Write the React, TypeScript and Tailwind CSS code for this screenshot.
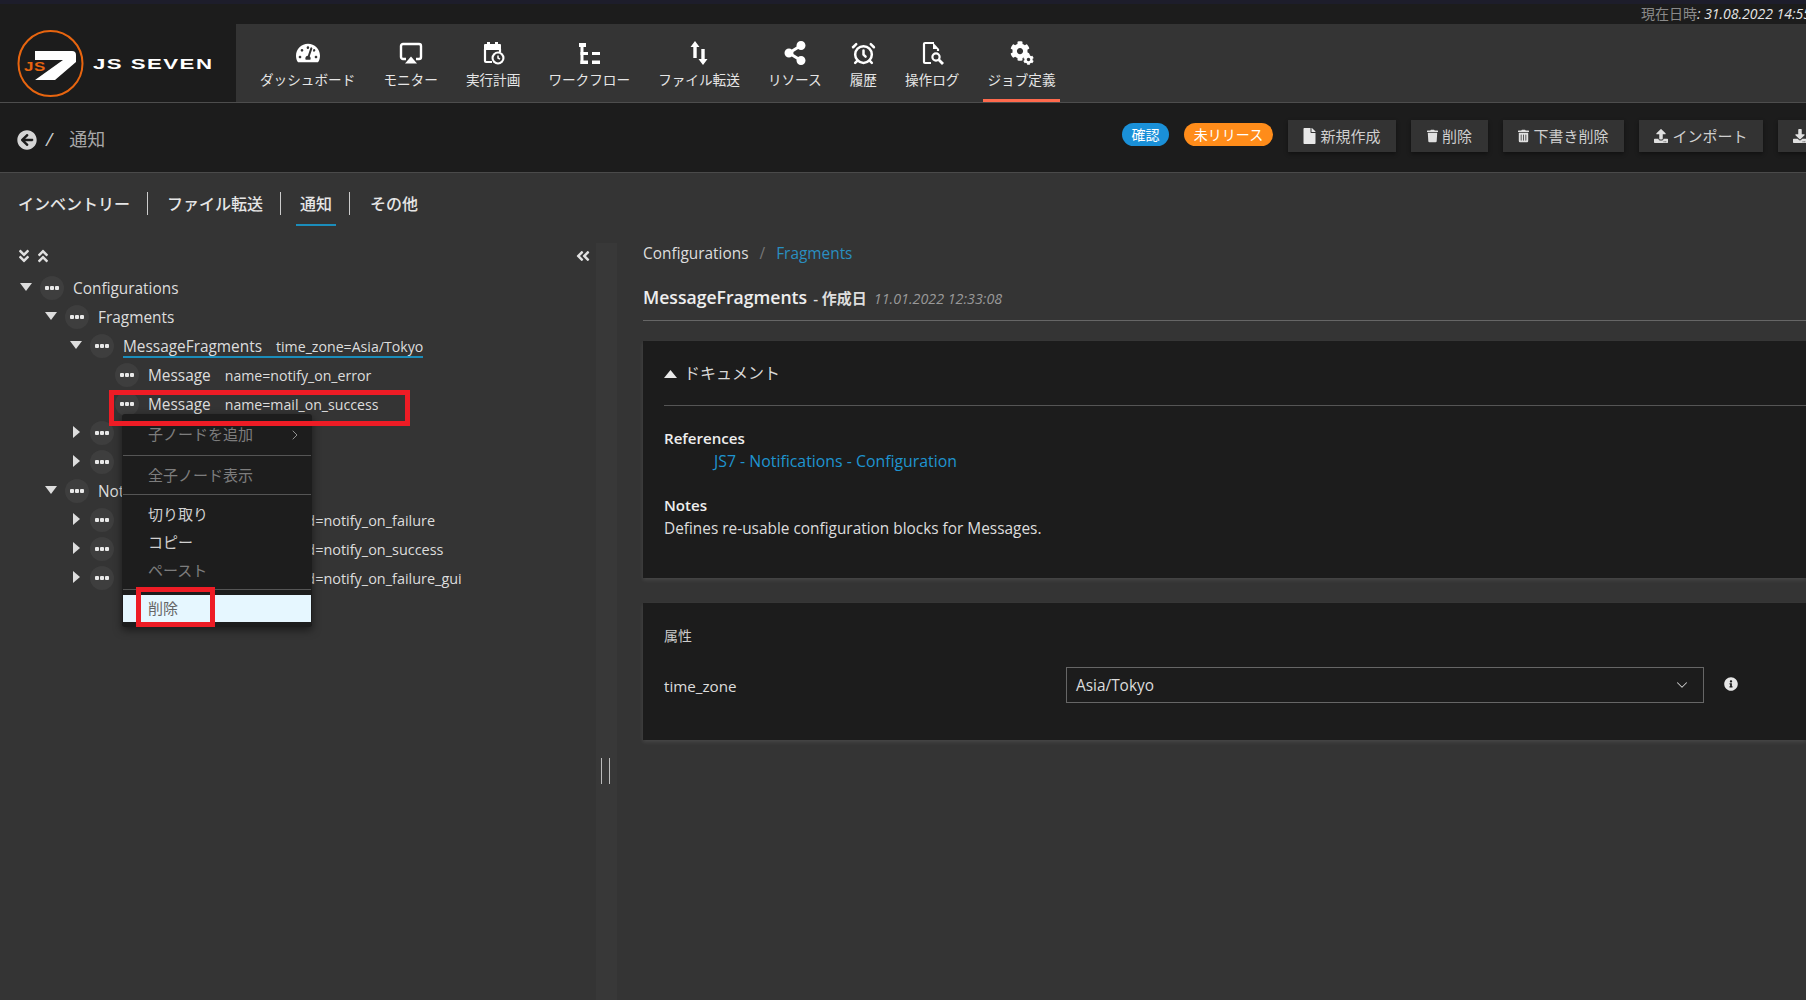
// App.tsx
import React from "react";
import {
  FaAngleDoubleDown,
  FaAngleDoubleLeft,
  FaAngleDoubleUp,
  FaArrowCircleLeft,
  FaCog,
  FaDownload,
  FaFile,
  FaInfoCircle,
  FaShareAlt,
  FaTachometerAlt,
  FaTrash,
  FaTrashAlt,
  FaUpload,
} from "react-icons/fa";
import { AlarmClock, ChevronDown, ChevronRight } from "lucide-react";

function AirplayIcon() {
  return (
    <svg viewBox="0 0 24 24" className="w-6 h-6" fill="none" stroke="#fff" strokeWidth="2.4">
      <path d="M7 18H4a2 2 0 0 1-2-2V5a2 2 0 0 1 2-2h16a2 2 0 0 1 2 2v11a2 2 0 0 1-2 2h-3" />
      <path d="M12 15.5l6 7H6z" fill="#fff" stroke="none" />
    </svg>
  );
}

function ScheduleIcon() {
  return (
    <svg viewBox="0 0 24 24" className="w-6 h-6" fill="none">
      <rect x="3" y="3" width="17" height="6" rx="1" fill="#fff" />
      <rect x="6" y="1" width="3" height="4" fill="#fff" />
      <rect x="14" y="1" width="3" height="4" fill="#fff" />
      <path d="M4 8v12a1 1 0 0 0 1 1h6M19 8v3" stroke="#fff" strokeWidth="2.2" />
      <circle cx="17" cy="17" r="6.5" fill="#fff" />
      <circle cx="17" cy="17" r="4.4" fill="#343434" />
      <path d="M17 14.5V17l2 1.2" stroke="#fff" strokeWidth="1.5" />
    </svg>
  );
}

function WorkflowIcon() {
  return (
    <svg viewBox="0 0 24 24" className="w-6 h-6" fill="#fff">
      <rect x="2" y="2" width="7" height="4" />
      <rect x="3.5" y="6" width="3" height="17" />
      <rect x="3.5" y="11" width="7.5" height="3" />
      <rect x="3.5" y="19.5" width="7.5" height="3.5" />
      <rect x="15" y="11" width="8" height="3" />
      <rect x="15" y="19.5" width="8" height="3.5" />
    </svg>
  );
}

function TransferIcon() {
  return (
    <svg viewBox="0 0 24 24" className="w-6 h-6" fill="#fff">
      <path d="M8 0l4.5 6H9.7v11H6.3V6H3.5z" />
      <path d="M16 24l4.5-6h-2.8V8h-3.4v10H11.5z" />
    </svg>
  );
}

function LogSearchIcon() {
  return (
    <svg viewBox="0 0 24 24" className="w-6 h-6" fill="none" stroke="#fff" strokeWidth="2.2">
      <path d="M14 2H5a1 1 0 0 0-1 1v18a1 1 0 0 0 1 1h6M18 8v2" />
      <path d="M13 1.5l6 6.5h-6z" fill="#fff" stroke="none" />
      <circle cx="16" cy="16" r="3.6" />
      <path d="M18.8 18.8L23 23" strokeWidth="2.8" />
    </svg>
  );
}

function GearsIcon() {
  return (
    <div className="relative w-6 h-6">
      <FaCog className="w-[20px] h-[20px] text-white" />
      <FaCog className="absolute right-0 bottom-0 w-[11px] h-[11px] text-white" />
    </div>
  );
}

function Logo() {
  return (
    <div className="w-[236px] h-full bg-[#1c1c1c] flex items-center pl-[17px] shrink-0">
      <div className="relative w-[67px] h-[67px] shrink-0">
        <svg viewBox="0 0 67 67" className="w-[67px] h-[67px]">
          <ellipse cx="33.5" cy="33.5" rx="32" ry="32.5" fill="none" stroke="#e8650f" strokeWidth="2" />
          <path d="M18 21H55Q59 21 59 25V32L38 50H18L46 30H18Z" fill="#fff" />
        </svg>
        <span className="absolute left-[7px] top-[30px] text-[#e8650f] text-[13px] leading-[13px] font-bold tracking-[0.5px] font-['Liberation_Sans',sans-serif] scale-x-[1.3] origin-left">
          JS
        </span>
      </div>
      <span className="ml-[9px] text-white text-[15px] leading-[15px] font-bold tracking-[1px] whitespace-nowrap font-['Liberation_Sans',sans-serif] scale-x-[1.48] origin-left">
        JS SEVEN
      </span>
    </div>
  );
}

const navItems = [
  { label: "ダッシュボード", icon: <FaTachometerAlt className="w-6 h-6 text-white" /> },
  { label: "モニター", icon: <AirplayIcon /> },
  { label: "実行計画", icon: <ScheduleIcon /> },
  { label: "ワークフロー", icon: <WorkflowIcon /> },
  { label: "ファイル転送", icon: <TransferIcon /> },
  { label: "リソース", icon: <FaShareAlt className="w-6 h-6 text-white" /> },
  { label: "履歴", icon: <AlarmClock className="w-[25px] h-[25px] text-white" strokeWidth={2.4} /> },
  { label: "操作ログ", icon: <LogSearchIcon /> },
  { label: "ジョブ定義", icon: <GearsIcon />, active: true },
];

function TopNav() {
  return (
    <div className="h-[79px] flex bg-[#343434] border-b border-[#4d4d4d] shrink-0">
      <Logo />
      <div className="flex pl-[20px] gap-[20px]">
        {navItems.map((item) => (
          <div
            key={item.label}
            className={
              "h-[78px] px-1 pt-[17px] flex flex-col items-center border-b-[3px] " +
              (item.active ? "border-[#ff6a4d]" : "border-transparent")
            }
          >
            <div className="h-6 flex items-center">{item.icon}</div>
            <div className="mt-[5px] text-[13.63px] leading-5 text-[#e6e6e6] whitespace-nowrap">
              {item.label}
            </div>
          </div>
        ))}
      </div>
    </div>
  );
}

function ToolButton({
  icon,
  label,
  width,
}: {
  icon: React.ReactNode;
  label: string;
  width: string;
}) {
  return (
    <button
      className={
        "h-[32px] flex items-center justify-center gap-[4px] bg-[#333333] text-[15px] text-[#cfcfcf] whitespace-nowrap shrink-0 shadow-[0_2px_4px_rgba(0,0,0,0.4)] " +
        width
      }
    >
      {icon}
      {label}
    </button>
  );
}

function SubHeader() {
  return (
    <div className="h-[70px] flex bg-[#1c1c1c] border-b border-[#4a4a4a] shrink-0 overflow-hidden">
      <div className="w-[1122px] shrink-0 flex items-center pl-[17px] pt-[4px]">
        <FaArrowCircleLeft className="w-5 h-5 text-[#d5d5d5]" />
        <span className="ml-[9px] text-[18px] text-[#cccccc] italic">/</span>
        <span className="ml-[17px] text-[18px] text-[#a8a8a8]">通知</span>
      </div>
      <div className="flex items-start pt-[17px] gap-[15px]">
        <span className="mt-[3px] w-[47px] h-[23px] rounded-full bg-[#1a90d8] text-white text-[14px] leading-[23px] text-center shrink-0">
          確認
        </span>
        <span className="mt-[3px] w-[89px] h-[23px] rounded-full bg-[#ff8c1a] text-white text-[14px] leading-[23px] text-center shrink-0">
          未リリース
        </span>
        <ToolButton width="w-[108px]" icon={<FaFile className="w-[13px] h-4 text-[#e8e8e8]" />} label="新規作成" />
        <ToolButton width="w-[77px]" icon={<FaTrash className="w-[11px] h-[14px] text-[#e0e0e0]" />} label="削除" />
        <ToolButton width="w-[121px]" icon={<FaTrashAlt className="w-[11px] h-[14px] text-[#e0e0e0]" />} label="下書き削除" />
        <ToolButton width="w-[124px]" icon={<FaUpload className="w-[14px] h-[14px] text-[#e0e0e0]" />} label="インポート" />
        <ToolButton width="w-[138px]" icon={<FaDownload className="w-[14px] h-[14px] text-[#e0e0e0]" />} label="エクスポート" />
      </div>
    </div>
  );
}

function Tabs() {
  return (
    <div className="h-[70px] flex items-start pt-[19px] pl-[18px] text-[16px] font-medium text-[#e6e6e6] shrink-0">
      <div className="h-[23px] leading-[25px] pr-[17px] border-r border-[#cccccc]">インベントリー</div>
      <div className="h-[23px] leading-[25px] pl-[19px] pr-[17px] border-r border-[#cccccc]">ファイル転送</div>
      <div className="relative h-[23px] leading-[25px] pl-[19px] pr-[17px] border-r border-[#cccccc]">
        通知
        <span className="absolute left-[15px] w-[40px] h-[2px] top-[32px] bg-[#1b8dbb]" />
      </div>
      <div className="h-[23px] leading-[25px] pl-[20px]">その他</div>
    </div>
  );
}

function Caret({ dir }: { dir: "down" | "right" | "none" }) {
  return (
    <span className="w-[12px] h-[12px] mr-[8px] shrink-0 flex items-center justify-center">
      {dir === "down" && (
        <svg viewBox="0 0 12 8" className="w-[12px] h-[8px] -mt-[4px]">
          <path d="M0 0h12L6 8z" fill="#dddddd" />
        </svg>
      )}
      {dir === "right" && (
        <svg viewBox="0 0 7 12" className="w-[7px] h-[12px] -mt-[3px]">
          <path d="M0 0l7 6-7 6z" fill="#dddddd" />
        </svg>
      )}
    </span>
  );
}

const treeRows = [
  { pad: "pl-[20px]", caret: "down", name: "Configurations" },
  { pad: "pl-[45px]", caret: "down", name: "Fragments" },
  { pad: "pl-[70px]", caret: "down", name: "MessageFragments", attr: "time_zone=Asia/Tokyo", attrSize: "text-[14.15px]", selected: true },
  { pad: "pl-[95px]", caret: "none", name: "Message", attr: "name=notify_on_error", attrSize: "text-[14.15px]" },
  { pad: "pl-[95px]", caret: "none", name: "Message", attr: "name=mail_on_success", attrSize: "text-[14.15px]" },
  { pad: "pl-[70px]", caret: "right", name: "MonitorFragments" },
  { pad: "pl-[70px]", caret: "right", name: "ObjectFragments" },
  { pad: "pl-[45px]", caret: "down", name: "Notifications" },
  { pad: "pl-[70px]", caret: "right", name: "Notification", attr: "notification_id=notify_on_failure", attrSize: "text-[14.45px]" },
  { pad: "pl-[70px]", caret: "right", name: "Notification", attr: "notification_id=notify_on_success", attrSize: "text-[14.45px]" },
  { pad: "pl-[70px]", caret: "right", name: "Notification", attr: "notification_id=notify_on_failure_gui", attrSize: "text-[14.45px]" },
] as const;

function TreeRow({ row }: { row: (typeof treeRows)[number] }) {
  const hasAttr = "attr" in row;
  const selected = "selected" in row && row.selected;
  return (
    <div className={"h-[29px] flex items-center whitespace-nowrap " + row.pad}>
      <Caret dir={row.caret} />
      <span className="w-6 h-6 mr-[9px] rounded-full bg-[#3e3e3e] flex items-center justify-center shrink-0 -mt-[1px]">
        <svg viewBox="0 0 14 4" className="w-[14px] h-[4px]" fill="#e8e8e8">
          <rect x="0" width="4" height="4" rx="1" />
          <rect x="5" width="4" height="4" rx="1" />
          <rect x="10" width="4" height="4" rx="1" />
        </svg>
      </span>
      <span
        className={
          "h-[23px] leading-[22px] text-[#dddddd] " +
          (selected ? "border-b-2 border-[#1b8dbb]" : "")
        }
      >
        <span className={hasAttr ? "mr-[14px] text-[15.4px]" : "text-[15.4px]"}>{row.name}</span>
        {hasAttr && <span className={row.attrSize}>{row.attr}</span>}
      </span>
    </div>
  );
}

function MenuItem({ label, muted }: { label: string; muted?: boolean }) {
  return (
    <div
      className={
        "h-[28px] leading-[26px] pl-[26px] text-[15px] " +
        (muted ? "text-[#7d7d7d]" : "text-[#d0d0d0]")
      }
    >
      {label}
    </div>
  );
}

function ContextMenu() {
  return (
    <div className="absolute left-[122px] top-[171px] w-[190px] h-[213px] pt-[7px] rounded-[3px] bg-[#1d1d1d] shadow-[0_3px_8px_rgba(0,0,0,0.5)]">
      <div className="relative">
        <MenuItem label="子ノードを追加" muted />
        <ChevronRight className="absolute right-[9px] top-[6px] w-4 h-4 text-[#999999]" strokeWidth={1.4} />
      </div>
      <div className="mt-[6px] mx-px h-px bg-[#555555]" />
      <div className="mt-[6px]">
        <MenuItem label="全子ノード表示" muted />
      </div>
      <div className="mt-[4px] mx-px h-px bg-[#555555]" />
      <div className="mt-[6px]">
        <MenuItem label="切り取り" />
        <MenuItem label="コピー" />
        <MenuItem label="ペースト" muted />
      </div>
      <div className="mt-[4px] mx-px h-px bg-[#555555]" />
      <div className="mt-[5px] mx-px h-[27px] leading-[26px] pl-[25px] bg-[#e6f7ff] text-[#666666] text-[15px]">
        削除
      </div>
    </div>
  );
}

function LeftPanel() {
  return (
    <div className="relative w-[596px] shrink-0">
      <div className="h-[31px] flex items-center justify-between pl-[16px] pr-[5px] text-[#e0e0e0]">
        <div className="flex gap-[3px] -mt-[6px]">
          <FaAngleDoubleDown className="w-[16px] h-[16px]" />
          <FaAngleDoubleUp className="w-[16px] h-[16px]" />
        </div>
        <FaAngleDoubleLeft className="w-[16px] h-[16px] -mt-[5px]" />
      </div>
      {treeRows.map((row, i) => (
        <TreeRow key={i} row={row} />
      ))}
      <ContextMenu />
      <div className="absolute left-[109px] top-[147px] w-[301px] h-[36px] border-[5px] border-[#ee1c25]" />
      <div className="absolute left-[136px] top-[344px] w-[79px] h-[40px] border-[5px] border-[#ee1c25]" />
    </div>
  );
}

function Splitter() {
  return (
    <div className="w-[21px] bg-[#383838] shrink-0 pt-[515px] pl-[5px]">
      <div className="w-[9px] h-[26px] border-x border-[#bbbbbb]" />
    </div>
  );
}

function DetailPanel() {
  return (
    <div className="flex-1 min-w-0 pl-[26px] text-[15.4px] text-[#dddddd]">
      <div className="h-[22px] leading-[22px] whitespace-nowrap">
        Configurations
        <span className="mx-[11px] text-[#777777]">/</span>
        <span className="text-[#2a8fc0]">Fragments</span>
      </div>
      <div className="mt-[22px] h-[22px] leading-[20px] pb-[11px] border-b border-[#666666] box-content whitespace-nowrap">
        <span className="text-[17.6px] font-semibold text-[#eeeeee]">MessageFragments</span>
        <span className="ml-[6px] text-[15px] font-semibold">- 作成日</span>
        <span className="ml-[7px] text-[14.3px] italic text-[#999999]">11.01.2022 12:33:08</span>
      </div>
      <section className="mt-[20px] h-[237px] pl-[21px] bg-[#1c1c1c] shadow-[0_2px_4px_rgba(255,255,255,0.1)]">
        <div className="pt-[21px] pb-[21px] border-b border-[#555555]">
          <div className="h-[22px] flex items-center gap-[7px] text-[16px] text-[#d8d8d8]">
            <svg viewBox="0 0 13 8" className="w-[13px] h-[8px] mt-[2px]">
              <path d="M6.5 0L13 8H0z" fill="#e8e8e8" />
            </svg>
            ドキュメント
          </div>
        </div>
        <div className="mt-[22px] h-[22px] leading-[20px] font-semibold text-[15.1px] text-[#eeeeee]">References</div>
        <div className="h-[22px] leading-[22px] pl-[50px] text-[15.85px] text-[#1f94cf]">JS7 - Notifications - Configuration</div>
        <div className="mt-[23px] h-[22px] leading-[20px] font-semibold text-[15.1px] text-[#eeeeee]">Notes</div>
        <div className="h-[22px] leading-[24px]">Defines re-usable configuration blocks for Messages.</div>
      </section>
      <section className="mt-[25px] h-[137px] pl-[21px] pt-[22px] bg-[#1c1c1c] shadow-[0_2px_4px_rgba(255,255,255,0.1)]">
        <div className="h-[22px] leading-[22px] text-[14px] text-[#cccccc]">属性</div>
        <div className="mt-[20px] h-[36px] flex items-center">
          <div className="w-[402px] shrink-0 pt-[2px] text-[15.2px]">time_zone</div>
          <div className="w-[638px] h-[36px] shrink-0 pl-[9px] pr-[12px] flex items-center justify-between border border-[#666666]">
            <span className="pt-[2px]">Asia/Tokyo</span>
            <ChevronDown className="w-[18px] h-[18px] text-[#cccccc]" strokeWidth={1.4} />
          </div>
          <FaInfoCircle className="ml-[20px] w-[14px] h-[14px] -mt-[2px] text-[#e6e6e6]" />
        </div>
      </section>
    </div>
  );
}

export default function App() {
  return (
    <div className="h-[1000px] w-full flex flex-col overflow-hidden bg-[#343434] font-['Open_Sans','Noto_Sans_CJK_JP',sans-serif]">
      <div className="h-[4px] bg-[#1d1d2b] shrink-0" />
      <div className="h-[20px] bg-[#1c1c1c] shrink-0 flex justify-end">
        <div className="w-[165px] overflow-hidden whitespace-nowrap text-[14px] leading-[20px]">
          <span className="text-[#8a8a8a]">現在日時</span>
          <span className="text-[#e6e6e6] italic">: 31.08.2022 14:55</span>
        </div>
      </div>
      <TopNav />
      <SubHeader />
      <Tabs />
      <div className="flex-1 min-h-0 flex">
        <LeftPanel />
        <Splitter />
        <DetailPanel />
      </div>
    </div>
  );
}
